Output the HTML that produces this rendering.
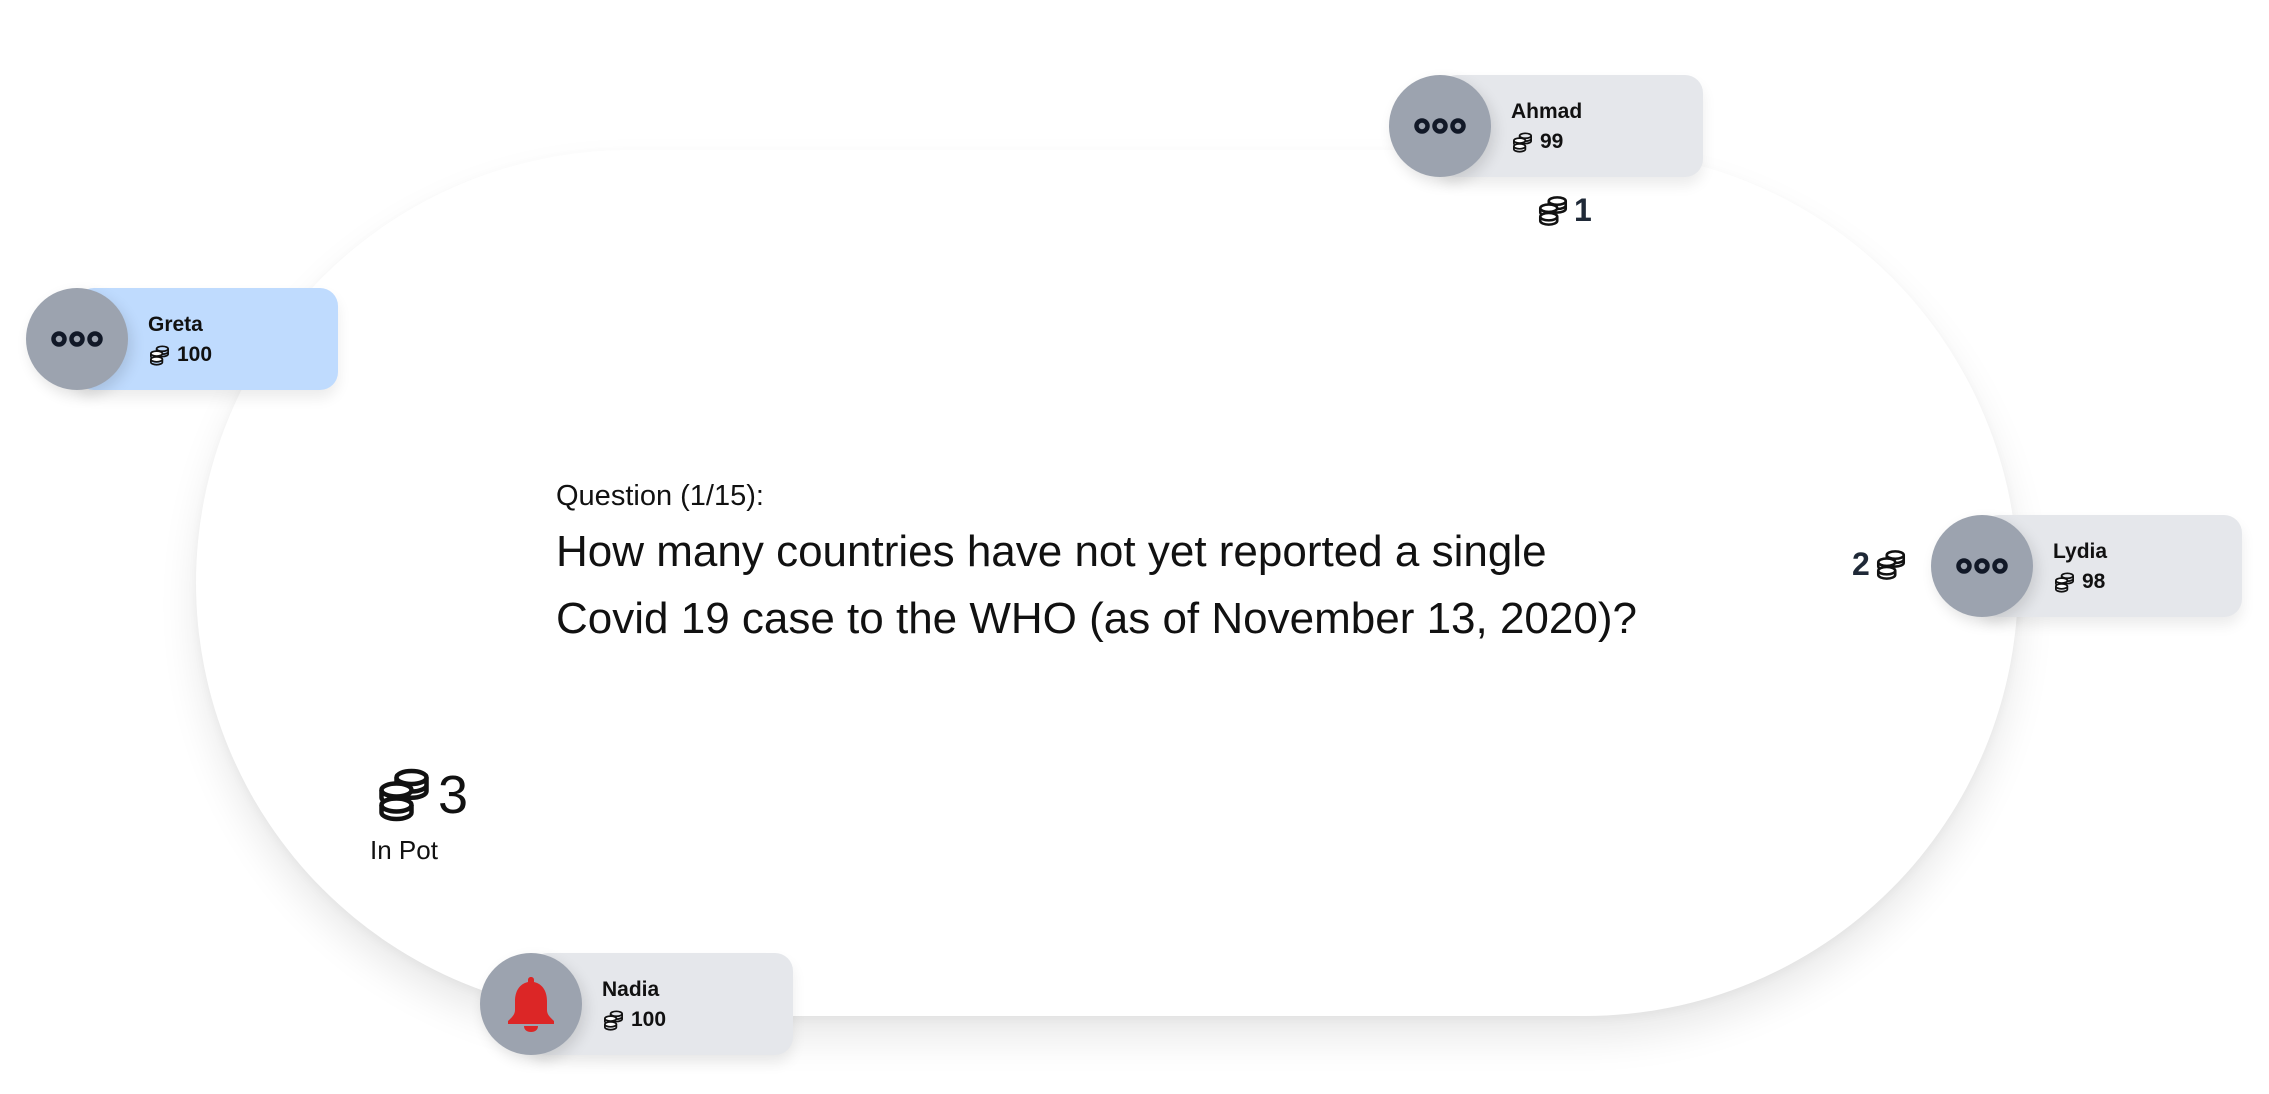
<!DOCTYPE html>
<html><head><meta charset="utf-8"><style>
html,body{margin:0;padding:0;width:2269px;height:1094px;background:#fff;overflow:hidden;font-family:"Liberation Sans",sans-serif;}
.table{position:absolute;left:196px;top:150px;width:1822px;height:866px;border-radius:433px;background:#fff;box-shadow:0 22px 40px rgba(0,0,0,0.09),0 4px 10px rgba(0,0,0,0.04);}
.p{position:absolute;height:102px;}
.card{position:absolute;left:50px;right:0;top:0;height:102px;background:#e5e7eb;border-radius:18px;box-shadow:0 8px 14px rgba(0,0,0,0.08);}
.circ{position:absolute;left:0;top:0;width:102px;height:102px;border-radius:50%;background:#9ca3af;box-shadow:4px 6px 14px rgba(0,0,0,0.12);}
.circ svg{position:absolute;left:0;top:0}
.name{position:absolute;left:122px;top:25px;font-weight:bold;font-size:21px;color:#111;}
.coins{position:absolute;left:122px;top:55px;font-weight:bold;font-size:21px;color:#111;display:flex;align-items:center;gap:6px;}
.q1{position:absolute;left:556px;top:480px;font-size:29px;color:#111;}
.q2{position:absolute;left:556px;top:518px;font-size:44px;line-height:67px;color:#111;}
.bet{position:absolute;font-weight:bold;font-size:32px;color:#1f2937;display:flex;align-items:center;gap:4px;}
</style></head><body>
<svg width="0" height="0" style="position:absolute"><defs>
<symbol id="coin" viewBox="0 0 24 24"><g fill="none" stroke="#111" stroke-width="1.8" stroke-linejoin="round">
<ellipse cx="15" cy="5" rx="6" ry="2.6"/><path d="M9 5v5.5c0 1.4 2.7 2.6 6 2.6s6-1.2 6-2.6V5M9 8c0 1.4 2.7 2.6 6 2.6s6-1.2 6-2.6"/>
<ellipse cx="9" cy="10" rx="6" ry="2.6" fill="#fff"/><path d="M3 10v3c0 1.4 2.7 2.6 6 2.6"/>
<ellipse cx="9" cy="16" rx="6" ry="2.6" fill="#fff"/><path d="M3 16v3c0 1.4 2.7 2.6 6 2.6s6-1.2 6-2.6v-3"/>
</g></symbol>
<symbol id="dots" viewBox="0 0 102 102"><g fill="none" stroke="#111827" stroke-width="4.5"><circle cx="33" cy="51" r="5.5"/><circle cx="51" cy="51" r="5.5"/><circle cx="69" cy="51" r="5.5"/></g></symbol>
</defs></svg>
<div class="table"></div>

<div class="p" style="left:1389px;top:75px;width:314px"><div class="card"></div><div class="circ"><svg width="102" height="102"><use href="#dots"/></svg></div><div class="name">Ahmad</div><div class="coins"><svg width="23" height="23"><use href="#coin"/></svg>99</div></div>
<div class="bet" style="left:1536px;top:192px"><svg width="34" height="34"><use href="#coin"/></svg>1</div>

<div class="p" style="left:26px;top:288px;width:312px"><div class="card" style="background:#bfdbfe"></div><div class="circ"><svg width="102" height="102"><use href="#dots"/></svg></div><div class="name">Greta</div><div class="coins"><svg width="23" height="23"><use href="#coin"/></svg>100</div></div>

<div class="p" style="left:1931px;top:515px;width:311px"><div class="card"></div><div class="circ"><svg width="102" height="102"><use href="#dots"/></svg></div><div class="name">Lydia</div><div class="coins"><svg width="23" height="23"><use href="#coin"/></svg>98</div></div>
<div class="bet" style="left:1852px;top:546px">2 <svg width="34" height="34"><use href="#coin"/></svg></div>

<div class="p" style="left:480px;top:953px;width:313px"><div class="card"></div><div class="circ"><svg width="102" height="102" viewBox="0 0 102 102"><path fill="#dc2626" d="M51 24c-2 0-3 1.3-3 3v2c-9 2-13 10-13 19v9c0 5-4 8-7 11v3h46v-3c-3-3-7-6-7-11v-9c0-9-4-17-13-19v-2c0-1.7-1-3-3-3zM44 73c0 4 3 6 7 6s7-2 7-6z"/></svg></div><div class="name">Nadia</div><div class="coins"><svg width="23" height="23"><use href="#coin"/></svg>100</div></div>

<div style="position:absolute;left:374px;top:764px;display:flex;align-items:center;gap:4px;font-size:54px;color:#111"><svg width="60" height="60"><use href="#coin"/></svg>3</div>
<div style="position:absolute;left:370px;top:835px;font-size:26px;color:#111">In Pot</div>

<div class="q1">Question (1/15):</div>
<div class="q2">How many countries have not yet reported a single<br>Covid 19 case to the WHO (as of November 13, 2020)?</div>
</body></html>
